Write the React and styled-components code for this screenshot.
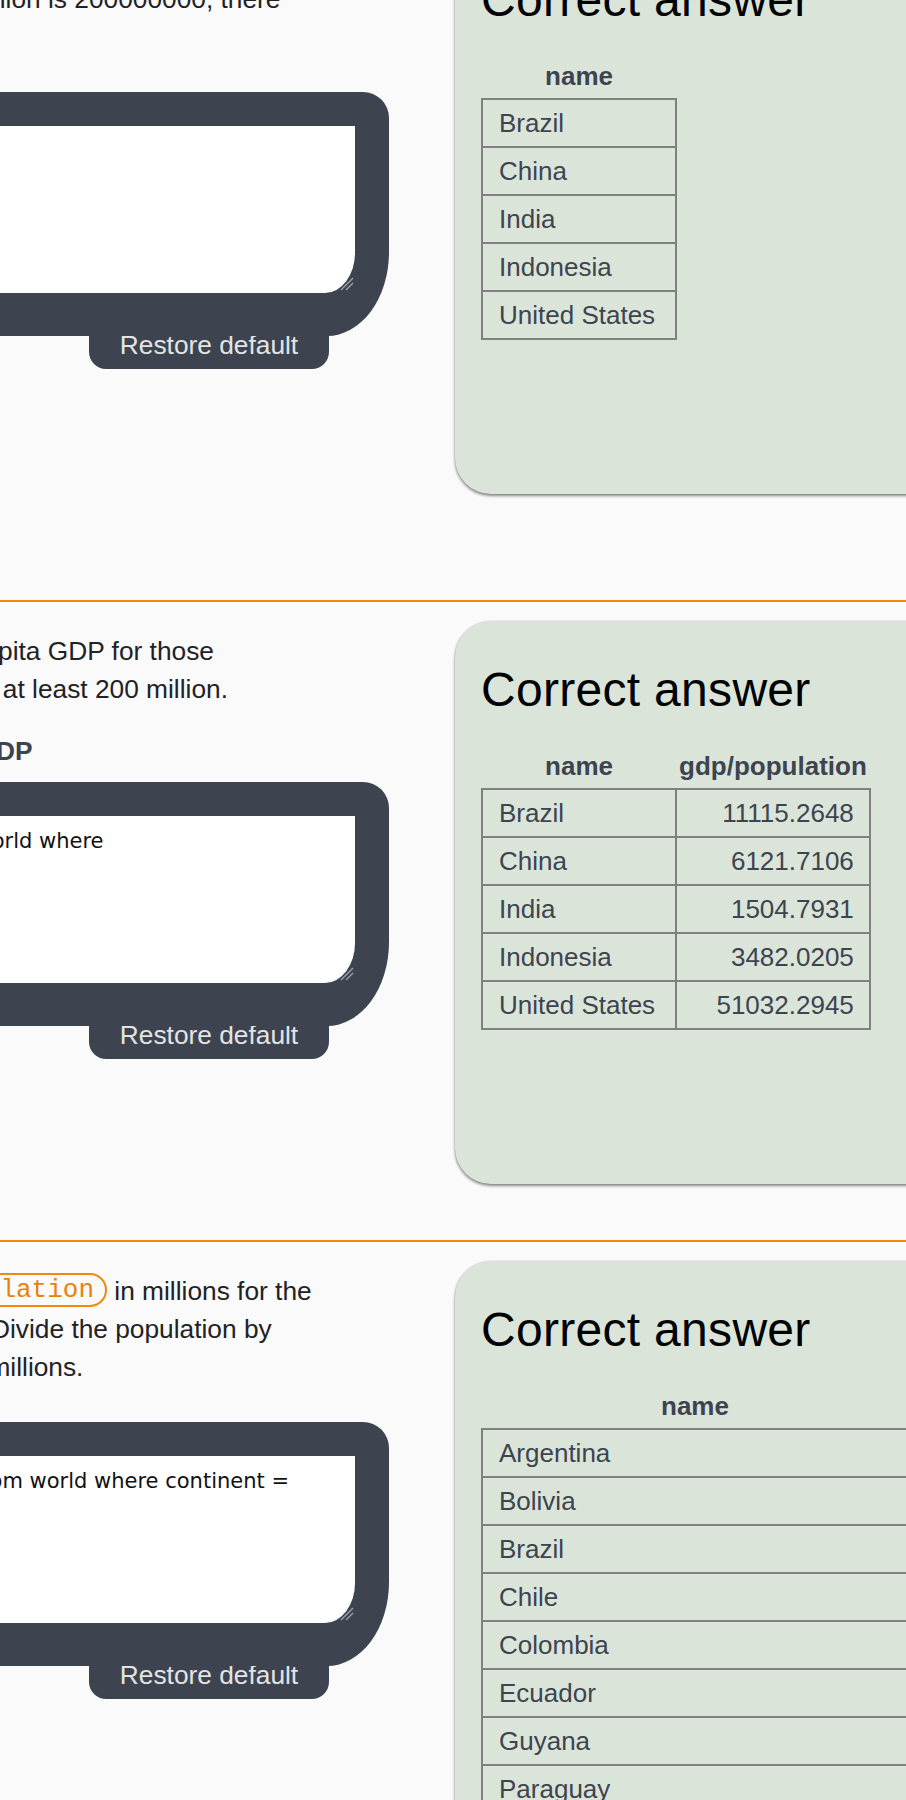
import React from 'react'
import styled, { createGlobalStyle } from 'styled-components'

const GlobalStyle = createGlobalStyle`
  html, body {
    margin: 0;
    padding: 0;
    overflow: hidden;
    background: #fafafa;
  }
  body {
    font-family: "Liberation Sans", Arial, sans-serif;
  }
`

const Page = styled.div`
  width: 906px;
  margin-top: -88px;
  overflow: hidden;
`

const Section = styled.section`
  display: grid;
  grid-template-columns: 455px 480px;
  align-items: start;
  border-top: ${props => props.$first ? 'none' : '2px solid #ef8a0e'};
  padding-top: 19px;
  padding-bottom: ${props => props.$tail}px;
`

const Question = styled.div`
  display: flex;
  flex-direction: column;
  padding-top: 11px;
  font-size: 26.3px;
  line-height: 38px;
  color: #222226;
`

const Para = styled.div`
  margin-bottom: 24px;
`

const Line = styled.div`
  white-space: nowrap;
  height: 38px;
  margin-left: ${props => props.$shift}px;
`

const Heading = styled.div`
  white-space: nowrap;
  height: 38px;
  font-weight: bold;
  color: #3d4450;
  margin-left: ${props => props.$shift}px;
`

const Code = styled.span`
  display: inline-block;
  vertical-align: 3px;
  font-family: "Liberation Mono", "Courier New", monospace;
  font-size: 26px;
  line-height: 30px;
  color: #e8820c;
  border: 2px solid #ef8a0e;
  border-radius: 17px;
  padding: 0 11px;
`

const Editor = styled.div`
  position: relative;
  z-index: 1;
  margin: 12px 0 0 -34px;
  width: 423px;
  box-sizing: border-box;
  padding: 34px 34px 43px;
  background: #3d4450;
  border-radius: 0 26px 62px 0 / 0 26px 84px 0;
`

const Input = styled.div`
  position: relative;
  height: 167px;
  box-sizing: border-box;
  padding-top: 11px;
  background: #fff;
  border-radius: 0 0 30px 0 / 0 0 40px 0;
  font-family: "DejaVu Sans", Verdana, sans-serif;
  font-size: 21px;
  line-height: 28px;
  color: #111;
`

const CodeLine = styled.div`
  white-space: nowrap;
  margin-left: ${props => props.$shift}px;
`

const Grip = styled.svg`
  position: absolute;
  right: 1px;
  bottom: 2px;
`

const Restore = styled.button`
  align-self: flex-start;
  margin: -15px 0 0 89px;
  width: 240px;
  height: 48px;
  padding: 0;
  border: 0;
  border-radius: 0 0 17px 17px;
  background: #3d4450;
  color: #e4e4e4;
  font-family: "Liberation Sans", Arial, sans-serif;
  font-size: 26.3px;
  line-height: 48px;
`

const Panel = styled.div`
  width: 480px;
  box-sizing: border-box;
  padding: 0 26px 154px;
  background: #dae4d9;
  border-radius: 36px 0 0 36px;
  box-shadow: 0 2px 3px rgba(0, 0, 0, 0.45), 0 0 2px rgba(0, 0, 0, 0.15);
`

const Title = styled.h2`
  margin: 41px 0 27px;
  font-size: 48px;
  font-weight: normal;
  letter-spacing: 0.3px;
  line-height: 55px;
  color: #000;
`

const Table = styled.table`
  border-collapse: collapse;
  width: ${props => props.$wide ? '100%' : 'auto'};
  font-size: 26px;
  color: #3d4450;
`

const Th = styled.th`
  padding: 0 3px;
  line-height: 44px;
  font-weight: bold;
  text-align: center;
`

const Td = styled.td`
  border: 2px solid #808080;
  padding: ${props => props.$num ? '0 15px 0 18px' : '0 20px 0 16px'};
  line-height: 46px;
  white-space: nowrap;
  text-align: ${props => props.$num ? 'right' : 'left'};
`

function ResizeGrip() {
  return (
    <Grip width="16" height="16" viewBox="0 0 16 16">
      <line x1="3" y1="15" x2="15" y2="3" stroke="#9aa0a8" strokeWidth="1.4" />
      <line x1="8" y1="15" x2="15" y2="8" stroke="#9aa0a8" strokeWidth="1.4" />
    </Grip>
  )
}

function Answer({ columns, rows, wide }) {
  return (
    <Panel>
      <Title>Correct answer</Title>
      <Table $wide={wide}>
        <thead>
          <tr>
            {columns.map(c => <Th key={c}>{c}</Th>)}
          </tr>
        </thead>
        <tbody>
          {rows.map(r => (
            <tr key={r[0]}>
              {r.map((v, i) => <Td key={i} $num={i > 0}>{v}</Td>)}
            </tr>
          ))}
        </tbody>
      </Table>
    </Panel>
  )
}

function Workspace({ lines }) {
  return (
    <>
      <Editor>
        <Input>
          {lines.map(l => <CodeLine key={l.text} $shift={l.shift}>{l.text}</CodeLine>)}
          <ResizeGrip />
        </Input>
      </Editor>
      <Restore>Restore default</Restore>
    </>
  )
}

const bigCountries = [['Brazil'], ['China'], ['India'], ['Indonesia'], ['United States']]

const perCapita = [
  ['Brazil', '11115.2648'],
  ['China', '6121.7106'],
  ['India', '1504.7931'],
  ['Indonesia', '3482.0205'],
  ['United States', '51032.2945'],
]

const southAmerica = [
  'Argentina', 'Bolivia', 'Brazil', 'Chile', 'Colombia', 'Ecuador',
  'Guyana', 'Paraguay', 'Peru', 'Suriname', 'Uruguay', 'Venezuela',
].map(n => [n])

export default function App() {
  return (
    <Page>
      <GlobalStyle />

      <Section $first $tail={106}>
        <Question>
          <Para>
            <Line $shift={0}>{'\u00a0'}</Line>
            <Line $shift={-85}>200 million is 200000000, there</Line>
            <Line $shift={0}>{'\u00a0'}</Line>
          </Para>
          <Workspace lines={[]} />
        </Question>
        <Answer columns={['name']} rows={bigCountries} />
      </Section>

      <Section $tail={56}>
        <Question>
          <Para>
            <Line $shift={-75}>per capita GDP for those</Line>
            <Line $shift={-177}>a population of at least 200 million.</Line>
          </Para>
          <Heading $shift={-156}>per capita GDP</Heading>
          <Workspace lines={[{ text: 'from world where', shift: -81 }]} />
        </Question>
        <Answer columns={['name', 'gdp/population']} rows={perCapita} />
      </Section>

      <Section $tail={56}>
        <Question>
          <Para>
            <Line $shift={-75}><Code>population</Code> in millions for the</Line>
            <Line $shift={-9}>Divide the population by</Line>
            <Line $shift={-168}>population in millions.</Line>
          </Para>
          <Workspace lines={[{ text: 'from world where continent =', shift: -26 }]} />
        </Question>
        <Answer columns={['name']} rows={southAmerica} wide />
      </Section>
    </Page>
  )
}
